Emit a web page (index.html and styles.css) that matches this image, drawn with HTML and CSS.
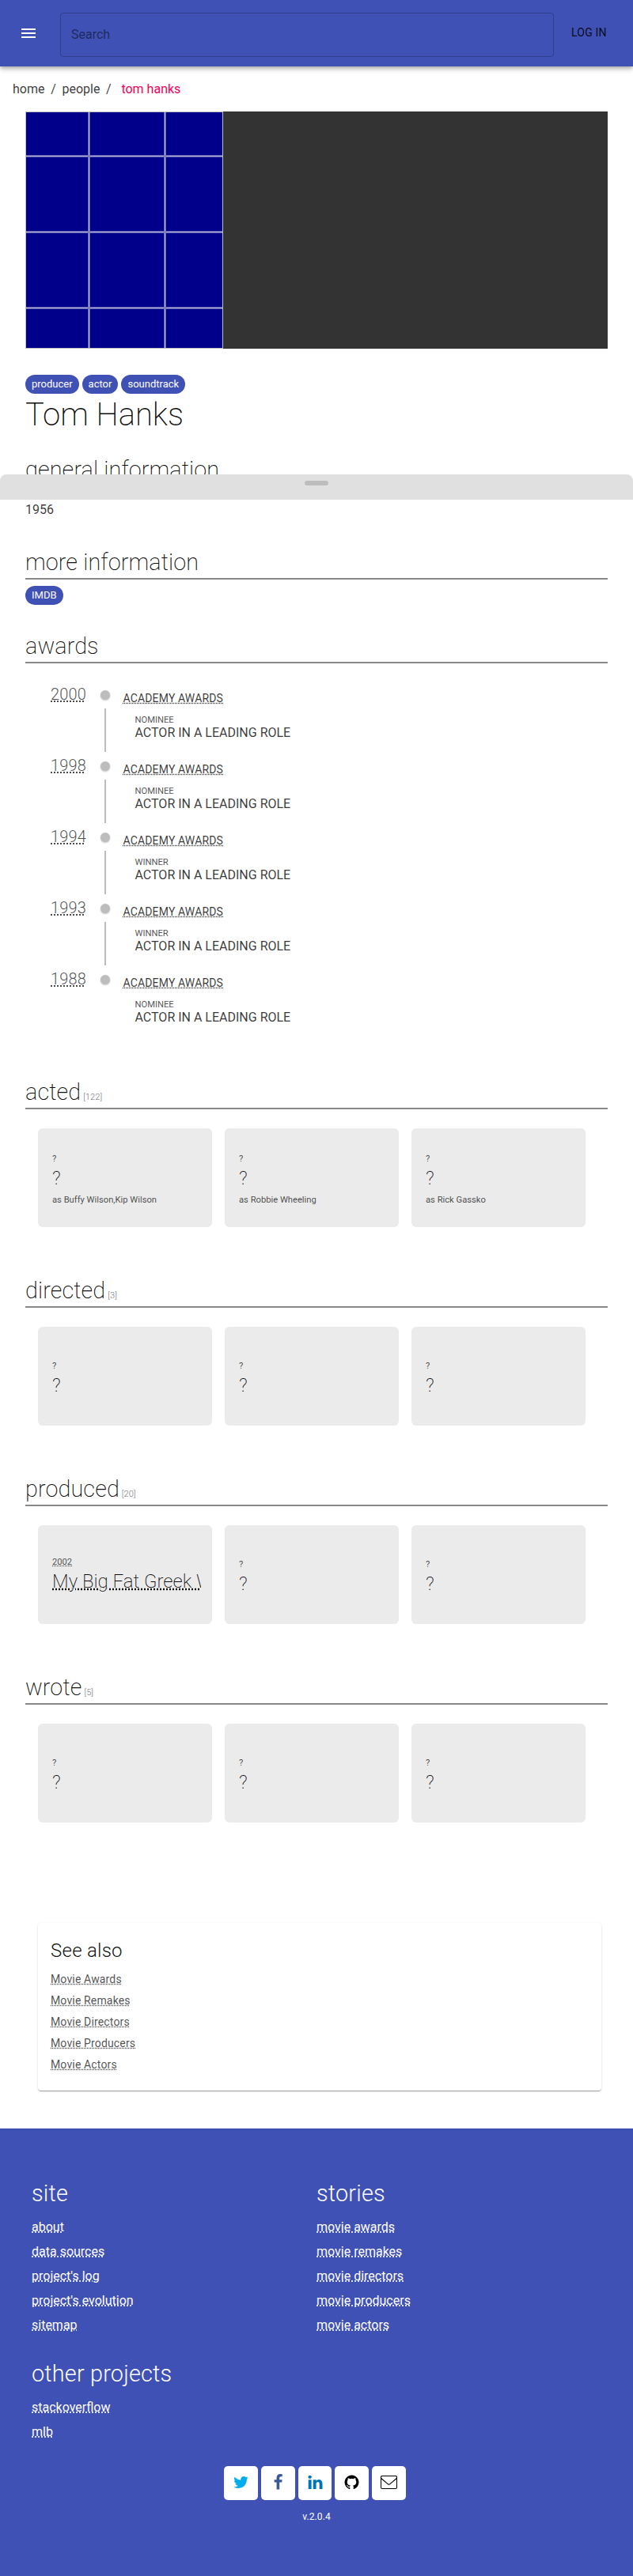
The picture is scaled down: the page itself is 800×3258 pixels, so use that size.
FILE: index.html
```html
<!DOCTYPE html>
<html lang="en">
<head>
<meta charset="utf-8">
<title>Tom Hanks</title>
<link rel="stylesheet" href="styles.css">
</head>
<body>
<header class="appbar">
  <svg class="menu" viewBox="0 0 24 24"><path d="M3 18h18v-2H3v2zm0-5h18v-2H3v2zm0-7v2h18V6H3z"/></svg>
  <div class="search">Search</div>
  <a class="login">LOG IN</a>
</header>
<nav class="crumbs"><a>home</a><span class="sep">/</span><a>people</a><span class="sep">/</span><a class="current">tom hanks</a></nav>
<main class="main">
  <div class="hero"><div class="photo"></div></div>
  <div class="chips"><span class="chip">producer</span><span class="chip">actor</span><span class="chip">soundtrack</span></div>
  <h1 class="name">Tom Hanks</h1>
  <section class="general">
    <h2 class="title">general information</h2>
    <div class="label">Birth</div>
    <div class="value">1956</div>
  </section>
  <section class="more">
    <h2 class="title">more information</h2>
    <div class="chips links"><span class="chip">IMDB</span></div>
  </section>
  <section class="awards">
    <h2 class="title">awards</h2>
    <div class="timeline">
      <div class="event"><a class="year">2000</a><div class="rail"><i class="dot"></i><i class="line"></i></div><div class="info"><a class="org">ACADEMY AWARDS</a><div class="result">NOMINEE</div><div class="role">ACTOR IN A LEADING ROLE</div></div></div>
      <div class="event"><a class="year">1998</a><div class="rail"><i class="dot"></i><i class="line"></i></div><div class="info"><a class="org">ACADEMY AWARDS</a><div class="result">NOMINEE</div><div class="role">ACTOR IN A LEADING ROLE</div></div></div>
      <div class="event"><a class="year">1994</a><div class="rail"><i class="dot"></i><i class="line"></i></div><div class="info"><a class="org">ACADEMY AWARDS</a><div class="result">WINNER</div><div class="role">ACTOR IN A LEADING ROLE</div></div></div>
      <div class="event"><a class="year">1993</a><div class="rail"><i class="dot"></i><i class="line"></i></div><div class="info"><a class="org">ACADEMY AWARDS</a><div class="result">WINNER</div><div class="role">ACTOR IN A LEADING ROLE</div></div></div>
      <div class="event"><a class="year">1988</a><div class="rail"><i class="dot"></i></div><div class="info"><a class="org">ACADEMY AWARDS</a><div class="result">NOMINEE</div><div class="role">ACTOR IN A LEADING ROLE</div></div></div>
    </div>
  </section>
  <section class="films">
    <h2 class="title">acted<small class="count">[122]</small></h2>
    <div class="cards">
      <div class="card credited"><div class="when">?</div><div class="film">?</div><div class="as">as Buffy Wilson,Kip Wilson</div></div>
      <div class="card credited"><div class="when">?</div><div class="film">?</div><div class="as">as Robbie Wheeling</div></div>
      <div class="card credited"><div class="when">?</div><div class="film">?</div><div class="as">as Rick Gassko</div></div>
    </div>
  </section>
  <section class="films">
    <h2 class="title">directed<small class="count">[3]</small></h2>
    <div class="cards">
      <div class="card"><div class="when">?</div><div class="film">?</div></div>
      <div class="card"><div class="when">?</div><div class="film">?</div></div>
      <div class="card"><div class="when">?</div><div class="film">?</div></div>
    </div>
  </section>
  <section class="films">
    <h2 class="title">produced<small class="count">[20]</small></h2>
    <div class="cards">
      <div class="card linked"><div class="when"><a>2002</a></div><div class="film"><a>My Big Fat Greek Wedding</a></div></div>
      <div class="card"><div class="when">?</div><div class="film">?</div></div>
      <div class="card"><div class="when">?</div><div class="film">?</div></div>
    </div>
  </section>
  <section class="films">
    <h2 class="title">wrote<small class="count">[5]</small></h2>
    <div class="cards">
      <div class="card"><div class="when">?</div><div class="film">?</div></div>
      <div class="card"><div class="when">?</div><div class="film">?</div></div>
      <div class="card"><div class="when">?</div><div class="film">?</div></div>
    </div>
  </section>
  <aside class="also">
    <h3 class="also-title">See also</h3>
    <div><a>Movie Awards</a></div>
    <div><a>Movie Remakes</a></div>
    <div><a>Movie Directors</a></div>
    <div><a>Movie Producers</a></div>
    <div><a>Movie Actors</a></div>
  </aside>
</main>
<footer class="footer">
  <div class="cols">
    <div class="col"><h2 class="ftitle">site</h2><div><a>about</a></div><div><a>data sources</a></div><div><a>project's log</a></div><div><a>project's evolution</a></div><div><a>sitemap</a></div></div>
    <div class="col"><h2 class="ftitle">stories</h2><div><a>movie awards</a></div><div><a>movie remakes</a></div><div><a>movie directors</a></div><div><a>movie producers</a></div><div><a>movie actors</a></div></div>
    <div class="col"><h2 class="ftitle">other projects</h2><div><a>stackoverflow</a></div><div><a>mlb</a></div></div>
  </div>
  <div class="social">
    <a class="btn twitter"><svg viewBox="0 0 1792 1792"><path d="M1684 408q-67 98-162 167 1 14 1 42 0 130-38 259.5t-115.5 248.5-184.5 210.5-258 146-323 54.5q-271 0-496-145 35 4 78 4 225 0 401-138-105-2-188-64.5t-114-159.5q33 5 61 5 43 0 85-11-112-23-185.5-111.5t-73.5-205.5v-4q68 38 146 41-66-44-105-115t-39-154q0-88 44-163 121 149 294.5 238.5t371.5 99.5q-8-38-8-74 0-134 94.5-228.5t228.5-94.5q140 0 236 102 109-21 205-78-37 115-142 178 93-10 186-50z"/></svg></a>
    <a class="btn facebook"><svg viewBox="0 0 1792 1792"><path d="M1343 12v264h-157q-86 0-116 36t-30 108v189h293l-39 296h-254v759h-306v-759h-255v-296h255v-218q0-186 104-288.5t277-102.5q147 0 228 12z"/></svg></a>
    <a class="btn linkedin"><svg viewBox="0 0 1792 1792"><path d="M477 625v991h-330v-991h330zm21-306q1 73-50.5 122t-135.5 49h-2q-82 0-132-49t-50-122q0-74 51.5-122.5t134.5-48.5 133 48.5 51 122.5zm1166 729v568h-329v-530q0-105-40.5-164.5t-126.5-59.5q-63 0-105.5 34.5t-63.5 85.5q-11 30-11 81v553h-329q2-399 2-647t-1-296l-1-48h329v144h-2q20-32 41-56t56.5-52 87-43.5 114.5-15.5q171 0 275 113.5t104 332.5z"/></svg></a>
    <a class="btn"><svg viewBox="0 0 1792 1792"><path d="M896 128q209 0 385.5 103t279.5 279.5 103 385.5q0 251-146.5 451.5t-378.5 277.5q-27 5-40-7t-13-30q0-3 .5-76.5t.5-134.5q0-97-52-142 57-6 102.5-18t94-39 81-66.5 53-105 20.5-150.5q0-119-79-206 37-91-8-204-28-9-81 11t-92 44l-38 24q-93-26-192-26t-192 26q-16-11-42.5-27t-83.5-38.5-85-13.5q-45 113-8 204-79 87-79 206 0 85 20.5 150t52.5 105 80.5 67 94 39 102.5 18q-39 36-49 103-21 10-45 15t-57 5-65.5-21.5-55.5-62.5q-19-32-48.5-52t-49.5-24l-20-3q-21 0-29 4.5t-5 11.5 9 14 13 12l7 5q22 10 43.5 38t31.5 51l10 23q13 38 44 61.5t67 30 69.5 7 55.5-3.5l23-4q0 38 .5 88.5t.5 54.5q0 18-13 30t-40 7q-232-77-378.5-277.5t-146.5-451.5q0-209 103-385.5t279.5-279.5 385.5-103z"/></svg></a>
    <a class="btn mail"><svg viewBox="0 0 21 21"><rect x=".5" y="2.5" width="20" height="16" rx="1.5"/><path d="M.8 5.5 8.8 12.4q1.7 1.5 3.4 0L20.2 5.5"/></svg></a>
  </div>
  <div class="version">v.2.0.4</div>
</footer>
<div class="drawer"><i class="handle"></i></div>
</body>
</html>
```
FILE: styles.css
```css
* { box-sizing: border-box; }
body {
  margin: 0;
  background: #fff;
  color: rgba(0, 0, 0, .78);
  font: 400 16px/24px Roboto, sans-serif;
}
h1, h2, h3 { margin: 0; font-weight: 300; }

.appbar {
  position: relative;
  display: flex;
  height: 84px;
  padding: 16px 0 0 24px;
  background: #3f51b5;
  box-shadow: 0 2px 4px -1px rgba(0,0,0,.2), 0 4px 5px 0 rgba(0,0,0,.14), 0 1px 10px 0 rgba(0,0,0,.12);
}
.menu { flex: none; width: 24px; height: 24px; margin-top: 14px; fill: #fff; }
.search {
  flex: none;
  width: 624px;
  height: 56px;
  margin-left: 28px;
  padding-left: 13px;
  border: 1px solid rgba(0,0,0,.23);
  border-radius: 4px;
  line-height: 54px;
  color: rgba(0,0,0,.5);
}
.login {
  margin-left: 22px;
  white-space: nowrap;
  font-size: 14px;
  line-height: 50px;
  letter-spacing: .2px;
  color: rgba(0,0,0,.87);
}

.crumbs { display: flex; height: 57px; padding: 17px 16px 0; }
.sep { width: 22px; text-align: center; }
.crumbs .current { margin-left: 5px; color: #f50057; }

.main { padding: 0 32px; }
.hero { height: 300px; background: #333; }
.photo {
  width: 250px;
  height: 300px;
  border: 1px solid #c0c0c0;
  background:
    linear-gradient(90deg, #5b5bb2 1px, #b3b3d9 1px 2px, #5b5bb2 2px 3px, transparent 3px) 78px 0 / 96px 100%,
    linear-gradient(#5b5bb2 1px, #b3b3d9 1px 2px, #5b5bb2 2px 3px, transparent 3px) 0 54px / 100% 96px,
    #00008b;
}
.chips { display: flex; gap: 4px; margin-top: 33px; }
.chip {
  height: 24px;
  padding: 0 8px;
  border-radius: 12px;
  background: #3f51b5;
  color: #fff;
  font-size: 13px;
}
.name, .title, .film { color: rgba(0,0,0,.95); font-weight: 200; }
.name { height: 74px; font-size: 40px; line-height: 53px; }
.title { height: 44px; border-bottom: 2px solid #888; font-size: 28.8px; line-height: 44px; letter-spacing: .1px; }
.general { height: 117px; }
.more { height: 106px; }
.label { height: 16px; font-size: 14.4px; line-height: 24px; letter-spacing: .15px; }
.value { line-height: 26px; }
.links { margin-top: 8px; }

.awards { height: 564px; }
.timeline { padding: 25px 32px 0; }
.event { display: flex; height: 90px; }
.year {
  width: 46px;
  font-size: 20px;
  font-weight: 300;
  line-height: 28px;
  letter-spacing: .15px;
  color: rgba(0,0,0,.7);
}
.year, .org, .linked a, .also a, .col a { text-decoration: underline dotted; }
.rail { display: flex; flex-direction: column; align-items: center; width: 46px; padding-top: 9px; }
.dot {
  width: 12px;
  height: 12px;
  border-radius: 50%;
  background: #bdbdbd;
  box-shadow: 0 1px 2px rgba(0,0,0,.25);
}
.line { width: 2px; height: 55px; margin-top: 11px; background: #bdbdbd; }
.info { padding-top: 7px; margin-left: -.5px; }
.org { display: block; font-size: 14px; line-height: 24px; letter-spacing: .15px; }
.result { padding: 8px 0 0 15px; font-size: 11.2px; line-height: 15px; color: rgba(0,0,0,.7); }
.role { padding-left: 15px; line-height: 17px; }

.films { height: 251px; }
.count { margin-left: 3px; font-size: 11.2px; font-weight: 300; letter-spacing: 0; color: rgba(0,0,0,.6); }
.cards { display: flex; gap: 16px; padding: 24px 16px 0; }
.card {
  display: flex;
  flex-direction: column;
  justify-content: center;
  flex: 0 0 220px;
  min-width: 0;
  height: 125px;
  padding: 7px 14px 0 18px;
  border-radius: 6px;
  background: #ebebeb;
}
.credited { padding-top: 4px; }
.when { font-size: 11.2px; line-height: 20px; color: rgba(0,0,0,.7); }
.film { overflow: hidden; margin-bottom: 4px; white-space: nowrap; font-size: 24px; line-height: 28px; }
.as { font-size: 11.2px; line-height: 20px; color: rgba(0,0,0,.7); }
.linked { padding-bottom: 7px; }

.also {
  width: 712px;
  height: 212px;
  margin: 69px 0 48px 16px;
  padding: 16px;
  border-radius: 4px;
  box-shadow: 0 2px 1px -1px rgba(0,0,0,.2), 0 1px 1px 0 rgba(0,0,0,.14), 0 1px 3px 0 rgba(0,0,0,.12);
  font-size: 14px;
  line-height: 27px;
  letter-spacing: .15px;
  color: rgba(0,0,0,.7);
}
.also-title { height: 42px; font-size: 24px; line-height: 38px; letter-spacing: .25px; color: rgba(0,0,0,.95); }

.footer {
  height: 566px;
  padding: 57px 40px 0;
  background: #3f51b5;
  color: #fff;
}
.cols { display: grid; grid-template-columns: 360px 360px; }
.col { line-height: 31px; height: 228px; }
.ftitle { height: 52px; font-size: 28.8px; line-height: 50px; letter-spacing: .2px; }
.col:last-child { height: 142px; }
.social { display: flex; gap: 4px; padding-left: 243px; }
.btn {
  display: flex;
  align-items: center;
  justify-content: center;
  width: 43px;
  height: 43px;
  padding-bottom: 2px;
  border-radius: 5px;
  background: #fff;
}
.btn svg { width: 21px; height: 21px; }
.twitter { fill: #00acee; }
.facebook { fill: #3b5998; }
.linkedin { width: 42px; fill: #0077b5; }
.mail { fill: none; stroke: #000; stroke-width: 1.1; }
.version { margin-top: 11px; text-align: center; font-size: 12px; line-height: 20px; letter-spacing: .1px; }

.drawer {
  position: absolute;
  top: 600px;
  left: 0;
  right: 0;
  height: 32px;
  border-radius: 8px 8px 0 0;
  background: #e0e0e0;
}
.handle {
  display: block;
  width: 30px;
  height: 6px;
  margin: 8px auto 0;
  border-radius: 3px;
  background: #bdbdbd;
}
```
